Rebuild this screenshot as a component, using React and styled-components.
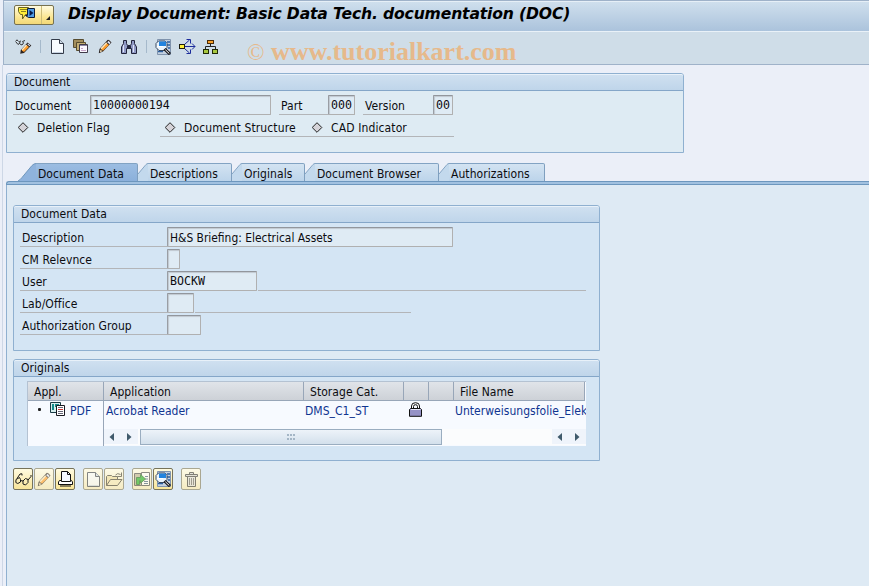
import React from 'react';
import styled, { createGlobalStyle } from 'styled-components';

const GlobalStyle = createGlobalStyle`
  body {
    margin: 0;
    background: #ebeff8;
    overflow: hidden;
  }
  * {
    box-sizing: border-box;
  }
`;

/* ---------- icons ---------- */

const Svg = ({ w = 16, h = 16, children, faded }) => (
    <Icon width={w} height={h} viewBox={`0 0 ${w} ${h}`} $faded={faded} fill="none">
        {children}
    </Icon>
);

const MenuIcon = () => (
    <Svg w={18} h={14}>
        <path d="M0.500 0.500 H10.500 V7.500 H7.500 L4.500 12 V7.500 H2.500 L0.500 4.500 Z" fill="#ffee3a" stroke="#6a6420" />
        <path d="M2 2.500 H9 M3 4.500 H8" stroke="#8a8220" />
        <path d="M9.500 1.500 H16.500 V10.500 H10.500 L7.500 8.500 H9.500 Z" fill="#4f9de8" stroke="#101c38" />
        <path d="M11.500 3 L15.500 6 L11.500 9 Z" fill="#061a4a" />
    </Svg>
);

const DisplayChangeIcon = () => (
    <Svg w={17}>
        <path d="M0.500 2.500 L2 0.800 L3.500 2.500 M1 3 L3 5.500 L5 4 L4.500 2.500 L6 2 M5 5 L7 6 L8.500 4 L7.500 2.500 L10 1.500" stroke="#333" />
        <path d="M5.200 14.800 L5.800 11 L12.500 3.500 L16.300 6.500 L9 14 Z" fill="#2a2220" />
        <path d="M6.800 11.500 L11.500 6 L14 8 L9 13 Z" fill="#ff9d2c" />
        <path d="M7 11 L11.500 6" stroke="#ffe9bd" strokeWidth="1.400" />
        <path d="M12.300 5.200 L13 4.500 L15.200 6.400 L14.500 7.200 Z" fill="#dfe3f4" />
    </Svg>
);

const PageIcon = ({ faded }) => (
    <Svg w={13} h={15} faded={faded}>
        <path d="M0.500 0.500 H8.500 L12.500 4.500 V14.500 H0.500 Z" fill="#f7fbff" stroke="#333a48" />
        <path d="M8.500 0.500 V4.500 H12.500" fill="#cfdbe8" stroke="#333a48" />
        <path d="M1.500 13.500 H11.500" stroke="#c7d3e2" />
    </Svg>
);

const CopyIcon = () => (
    <Svg w={16} h={15}>
        <path d="M0.500 0.500 H10.500 V8.500 H0.500 Z" fill="#a38e5c" stroke="#574c30" />
        <path d="M3.500 3.500 H12.500 V11.500 H3.500 Z" fill="#c4ae74" stroke="#574c30" />
        <path d="M6.500 5.500 H14.500 V13.500 H6.500 Z" fill="#fbf8ff" stroke="#3f3a48" />
        <path d="M7 6.500 H14" stroke="#8d86a4" />
        <path d="M8 9.500 H10 M8 11.500 H13" stroke="#c6a4c8" />
    </Svg>
);

const PencilIcon = ({ faded }) => (
    <Svg w={14} h={15} faded={faded}>
        <path d="M0.800 14.200 L1.500 10 L9.500 1 Q11 0.300 13.500 3.500 L5 12.500 Z" fill="#2a2220" />
        <path d="M2.800 10 L8.500 4 L11 6 L5 11.800 Z" fill="#ff9d2c" />
        <path d="M3 9.700 L8.700 3.800" stroke="#ffe9bd" strokeWidth="1.500" />
        <path d="M9.200 3.200 L10.500 1.800 L12.500 3.700 L11.500 5.200 Z" fill="#dfe3f4" />
        <path d="M2.400 10.500 L4.400 12.200 L2 13.200 Z" fill="#f6dcae" />
    </Svg>
);

const BinocularsIcon = () => (
    <Svg w={16}>
        <path d="M2.500 1.500 H5.500 V4.500 L6.500 6.500 H9.500 L10.500 4.500 V1.500 H13.500 V4.500 L15.500 8 V14.500 H10.500 V9.500 H5.500 V14.500 H0.500 V8 L2.500 4.500 Z" fill="#8f98c4" stroke="#22243c" />
        <path d="M2.500 6 V13 M12.500 6 V13" stroke="#dfe4f6" />
        <path d="M6 8 H10" stroke="#22243c" strokeWidth="2" />
    </Svg>
);

const SearchDocIcon = () => (
    <Svg w={17}>
        <path d="M2.500 0.500 H15.500 V15.500 H2.500 Z" fill="#c3d0e0" stroke="#7f93ad" />
        <path d="M12 3 H15 M12 6 H15 M13 9 H15 M3 12.500 H8" stroke="#2c5f9f" strokeWidth="1.500" />
        <path d="M3.500 2 H10 L12 4.500 V8.500 L9.500 11.500 H4 L1 8.500 V4.500 Z" fill="#eaf4fd" stroke="#3a4a60" />
        <path d="M4 2.500 H11 V7 H4 Z" fill="#2283de" />
        <path d="M2 7.500 H8" stroke="#fff" />
        <path d="M9.500 10 L15 15.200" stroke="#16161c" strokeWidth="3" />
        <path d="M10.300 10.700 L14.300 14.500" stroke="#fff" strokeWidth="1" />
    </Svg>
);

const ArrowsIcon = () => (
    <Svg w={17} h={15}>
        <path d="M6 7.500 H16 M6 5 L10.500 1 M6 10 L10.500 14 M13 4.500 L16 7.500 L13 10.500 M7.500 0.500 H11.500 V4.500 M7.500 14.500 H11.500 V10.500" stroke="#1c2c9c" />
        <rect x="0.500" y="5.500" width="5" height="4" fill="#fff23c" stroke="#1d1d10" />
    </Svg>
);

const TreeIcon = () => (
    <Svg w={16} h={14}>
        <path d="M7.500 4 V7 M2.500 10 V6.500 H12.500 V10" stroke="#222" />
        <rect x="4.500" y="0.500" width="6" height="3" fill="#f7a02a" stroke="#4a2c08" />
        <rect x="0.500" y="9.500" width="5" height="4" fill="#a8c840" stroke="#1f2a08" />
        <rect x="9.500" y="9.500" width="5" height="4" fill="#a8c840" stroke="#1f2a08" />
    </Svg>
);

const Diamond = () => (
    <Svg w={11} h={11}>
        <path d="M5 0.700 L9.800 5.500 L5 10.300 L0.200 5.500 Z" fill="#d5d3d8" stroke="#222" />
    </Svg>
);

const DocTypeIcon = () => (
    <Svg w={15} h={14}>
        <path d="M0.500 0.500 H10.500 V10.500 H0.500 Z" fill="#d6eeee" stroke="#1a3b44" />
        <path d="M2 2 H4 V8 H2 Z M5 2 H9 V5 H5 Z" fill="#138a8a" />
        <path d="M6.500 3.500 H14.500 V13.500 H6.500 Z" fill="#fff" stroke="#1a1a22" />
        <path d="M8 5.500 H13 M8 9.500 H13 M8 11.500 H13" stroke="#667" />
        <path d="M8 7.500 H13" stroke="#c33" />
    </Svg>
);

const LockIcon = () => (
    <Svg w={13} h={15}>
        <path d="M2.500 7 V4 Q2.500 0.700 6.500 0.700 Q10.500 0.700 10.500 4 V7" fill="#fff" stroke="#111" />
        <path d="M4.500 7 V4.500 Q4.500 2.700 6.500 2.700 Q8.500 2.700 8.500 4.500 V7" fill="#f7faff" stroke="#111" />
        <path d="M1.500 6.500 H11.500 L12.500 7.500 V14.300 H0.500 V7.500 Z" fill="#9592c6" stroke="#111" />
        <path d="M2 7.500 H11.500" stroke="#e6e6f8" />
    </Svg>
);

const GlassesIcon = () => (
    <Svg w={17} h={13}>
        <path d="M4.500 4.500 L1 6.500 L0.800 9.500 L2.800 10.500 L5.500 9 L5.500 6.500 Z M10.500 5.500 L8 8 L8 11 L10.500 12 L13 9.500 L13 6.500 Z M5.500 7.500 L8 8 M2 5.500 L5 1 L7 0.800 L7 2.500 M13 7 L16 3.500 V2" stroke="#1a1a1a" />
    </Svg>
);

const PrintIcon = () => (
    <Svg w={15} h={16}>
        <path d="M3.500 0.500 H9.500 L12.500 3.500 V10.500 H3.500 Z" fill="#f7fbff" stroke="#111" />
        <path d="M9.500 0.500 V3.500 H12.500" stroke="#111" />
        <path d="M3.500 9.500 H1.500 L0.500 11 V13.500 H14.500 V11 L13.500 9.500 H12.500 V10.500 H3.500 Z" fill="#fff" stroke="#111" />
        <path d="M2 15 H13" stroke="#111" strokeWidth="1" />
    </Svg>
);

const OpenIcon = () => (
    <Svg w={17} h={15} faded>
        <path d="M0.500 13.500 V4.500 L1.500 3.500 H5.500 L6.500 4.500 H11.500 V7.500" fill="#f0dfa2" stroke="#3c3a30" />
        <path d="M0.500 13.500 L4.500 7.500 H16 L11.500 13.500 Z" fill="#f6eaba" stroke="#3c3a30" />
        <path d="M9.500 3 Q11.500 0.500 14.500 2.500 M15.500 0.500 V4.500 H11.500" stroke="#3c3a30" />
    </Svg>
);

const CheckInIcon = () => (
    <Svg w={17} h={15} faded>
        <path d="M0.500 1.500 H7.500 V13.500 H0.500 Z" fill="#b8b08f" stroke="#444" />
        <path d="M7.500 0.500 H15.500 V13.500 H7.500 Z" fill="#fff" stroke="#444" />
        <path d="M11 4.500 H14 M11 7 H14 M10 9.500 H14 M10 11.500 H14" stroke="#3b587c" />
        <path d="M2.500 12.500 V5.500 H6.500 V2.500 L11.500 7 L6.500 11 V8.500 H5.500 V12.500 Z" fill="#18b020" stroke="#176a1c" />
    </Svg>
);

const TrashIcon = () => (
    <Svg w={13} h={15} faded>
        <path d="M0.500 2.500 H12.500 V4.500 H0.500 Z M4.500 2.500 V0.500 H8.500 V2.500" fill="#d6d6d6" stroke="#333" />
        <path d="M2.500 4.500 H10.500 V14.500 H2.500 Z" fill="#e0e0e0" stroke="#333" />
        <path d="M4.500 6 V13 M6.500 6 V13 M8.500 6 V13" stroke="#666" />
    </Svg>
);

const Arrow = ({ left }) => (
    <ArrowBox $left={left}>
        <Svg w={5} h={8}>
            <path d={left ? 'M5 0 V8 L0.500 4 Z' : 'M0 0 V8 L4.500 4 Z'} fill="#3f5a6b" />
        </Svg>
    </ArrowBox>
);

/* ---------- page ---------- */

const tabs = [
    { title: 'Document Data', width: 120, slant: 18, active: true },
    { title: 'Descriptions', width: 94, slant: 10 },
    { title: 'Originals', width: 73, slant: 10 },
    { title: 'Document Browser', width: 134, slant: 10 },
    { title: 'Authorizations', width: 106, slant: 10 },
];

const fields = [
    { label: 'Description', value: 'H&S Briefing: Electrical Assets', width: 286 },
    { label: 'CM Relevnce', value: '', width: 13 },
    { label: 'User', value: 'BOCKW', width: 90, mono: true, line: 328 },
    { label: 'Lab/Office', value: '', width: 27, line: 216 },
    { label: 'Authorization Group', value: '', width: 34 },
];

const App = () => {
    return (
        <Page>
            <GlobalStyle />
            <Header>
                <TitleBar>
                    <MenuButton>
                        <MenuMain><MenuIcon /></MenuMain>
                        <MenuDrop>
                            <Svg w={4} h={4}><path d="M4 0 V4 H0 Z" fill="#222" /></Svg>
                        </MenuDrop>
                    </MenuButton>
                    <Title>Display Document: Basic Data Tech. documentation (DOC)</Title>
                </TitleBar>
                <Toolbar>
                    <Tool $width={25}><DisplayChangeIcon /></Tool>
                    <Separator $gap={10} />
                    <Tool $width={22}><PageIcon /></Tool>
                    <Tool $width={25}><CopyIcon /></Tool>
                    <Tool $width={23}><PencilIcon /></Tool>
                    <Tool $width={25}><BinocularsIcon /></Tool>
                    <Separator $gap={8} />
                    <Tool $width={24}><SearchDocIcon /></Tool>
                    <Tool $width={24}><ArrowsIcon /></Tool>
                    <Tool $width={24}><TreeIcon /></Tool>
                </Toolbar>
                <Watermark><span>©</span> www.tutorialkart.com</Watermark>
            </Header>
            <Main>
                <DocumentPanel>
                    <PanelHeader>Document</PanelHeader>
                    <Row $indent={6} $top={2}>
                        <Label $width={77} $pad={2}>Document</Label>
                        <Field $width={181} $mono>10000000194</Field>
                        <Label $width={49} $pad={2} $gap={8}>Part</Label>
                        <Field $width={27} $mono>000</Field>
                        <Label $width={70} $pad={2} $gap={8}>Version</Label>
                        <Field $width={20} $mono>00</Field>
                    </Row>
                    <Row $indent={6}>
                        <Flag $width={147} $pad={5}><Diamond />Deletion Flag</Flag>
                        <Flag $width={147} $pad={5} $line><Diamond />Document Structure</Flag>
                        <Flag $width={147} $pad={5} $line><Diamond />CAD Indicator</Flag>
                    </Row>
                </DocumentPanel>
                <TabList>
                    {tabs.map((tab) => (
                        <Tab key={tab.title} $width={tab.width}>
                            <Svg w={tab.slant} h={18}>
                                {tab.active ? (
                                    <>
                                        <path d="M0 18 Q2 17 4 14.500 L14 2.500 Q16 0.500 18 0.500 V18 Z" fill="#8fb3dd" />
                                        <path d="M0 18 Q2 17 4 14.500 L14 2.500 Q16 0.500 18 0.500" stroke="#6f97bd" />
                                    </>
                                ) : (
                                    <>
                                        <path d="M0 11 L9 1 H10 V18 H0 Z" fill="#c3d9ed" />
                                        <path d="M0 11 L8 1.500 Q9 0.500 10 0.500" stroke="#82a3c3" />
                                    </>
                                )}
                            </Svg>
                            <TabBody $active={tab.active}>{tab.title}</TabBody>
                        </Tab>
                    ))}
                </TabList>
                <TabStrip />
                <TabPage>
                    <Group $height={146}>
                        <PanelHeader>Document Data</PanelHeader>
                        <Fields>
                            {fields.map((field) => (
                                <Row key={field.label} $indent={6}>
                                    <Label $width={147} $pad={2}>{field.label}</Label>
                                    <Field $width={field.width} $mono={field.mono}>{field.value}</Field>
                                    {field.line && <Line $width={field.line} />}
                                </Row>
                            ))}
                        </Fields>
                    </Group>
                    <Group $height={102}>
                        <PanelHeader>Originals</PanelHeader>
                        <Table>
                            <Cells>
                                <HeadCell>Appl.</HeadCell>
                                <HeadCell>Application</HeadCell>
                                <HeadCell>Storage Cat.</HeadCell>
                                <HeadCell />
                                <HeadCell />
                                <HeadCell>File Name</HeadCell>
                                <FirstCell><Bullet /><DocTypeIcon />PDF</FirstCell>
                                <Cell $pad={2}>Acrobat Reader</Cell>
                                <Cell>DMS_C1_ST</Cell>
                                <LockCell><LockIcon /></LockCell>
                                <Cell />
                                <Cell>Unterweisungsfolie_Elek</Cell>
                            </Cells>
                            <ScrollRow>
                                <ScrollBar>
                                    <Arrow left />
                                    <Arrow />
                                    <Thumb>
                                        <Svg w={8} h={6}>
                                            <path d="M0 1 H8 M0 5 H8" stroke="#a4b6c6" strokeWidth="2" strokeDasharray="2 1" />
                                        </Svg>
                                    </Thumb>
                                    <Track />
                                    <Arrow left />
                                    <Arrow />
                                </ScrollBar>
                            </ScrollRow>
                        </Table>
                    </Group>
                    <Actions>
                        <ActionButton><GlassesIcon /></ActionButton>
                        <ActionButton $faded><PencilIcon faded /></ActionButton>
                        <ActionButton><PrintIcon /></ActionButton>
                        <ActionButton $faded $gap={7}><PageIcon faded /></ActionButton>
                        <ActionButton $faded><OpenIcon /></ActionButton>
                        <ActionButton $faded $gap={7}><CheckInIcon /></ActionButton>
                        <ActionButton><SearchDocIcon /></ActionButton>
                        <ActionButton $faded $gap={7}><TrashIcon /></ActionButton>
                    </Actions>
                </TabPage>
            </Main>
        </Page>
    );
};

export default App;

const Icon = styled.svg`
  display: block;
  flex: none;
  opacity: ${(p) => (p.$faded ? 0.6 : 1)};
`;

const Page = styled.div`
  width: 869px;
  height: 586px;
  overflow: hidden;
  display: flex;
  flex-direction: column;
  background: #ebeff8;
  color: #0c0c10;
  font-family: "DejaVu Sans Condensed", "DejaVu Sans", sans-serif;
  font-stretch: condensed;
  font-size: 12px;
  line-height: 16px;
  letter-spacing: 0.06px;
  white-space: nowrap;
`;

const Header = styled.div`
  position: relative;
  flex: none;
  margin-left: 3px;
  height: 65px;
  border: solid #9fb2c9;
  border-width: 1px 0 1px 1px;
`;

const TitleBar = styled.div`
  display: flex;
  align-items: flex-start;
  height: 31px;
  padding: 4px 0 0 10px;
  border-top: 1px solid #e6eff7;
  border-bottom: 1px solid #e9f1f8;
  background: linear-gradient(#cfdfed, #abc3dc);
`;

const MenuButton = styled.div`
  display: flex;
  width: 40px;
  height: 20px;
  margin-top: -1px;
  border: 1px solid #77714f;
  border-radius: 2px;
  background: linear-gradient(#fffbe0, #fbe795 60%, #f3d877);
`;

const MenuMain = styled.div`
  width: 27px;
  padding: 1px 0 0 3px;
  border-right: 1px solid #cdbd78;
`;

const MenuDrop = styled.div`
  flex: 1;
  display: flex;
  align-items: flex-end;
  justify-content: flex-end;
  padding: 0 3px 4px 0;
`;

const Title = styled.div`
  margin-left: 14px;
  margin-top: -2px;
  font-family: "DejaVu Sans", sans-serif;
  font-stretch: normal;
  font-size: 15.6px;
  line-height: 20px;
  letter-spacing: -0.15px;
  font-weight: bold;
  font-style: italic;
  color: #000;
`;

const Toolbar = styled.div`
  display: flex;
  align-items: center;
  height: 32px;
  padding: 0 0 3px 11px;
  background: #cfdde8;
`;

const Tool = styled.div`
  width: ${(p) => p.$width}px;
  flex: none;
`;

const Separator = styled.div`
  width: 1px;
  height: 13px;
  margin-right: ${(p) => p.$gap}px;
  background: #a5b9cb;
`;

const Watermark = styled.div`
  position: absolute;
  left: 243px;
  top: 36px;
  font-family: "Liberation Serif", serif;
  font-size: 26px;
  line-height: 30px;
  letter-spacing: 0;
  font-weight: bold;
  color: #e6b98b;
  span {
    font-weight: normal;
    font-size: 23px;
  }
`;

const Main = styled.div`
  flex: 1;
  margin-left: 2px;
  padding: 8px 0 0 3px;
  border-left: 1px solid #cdd7e6;
  display: flex;
  flex-direction: column;
`;

const DocumentPanel = styled.div`
  width: 678px;
  height: 80px;
  flex: none;
  border: 1px solid #8fb0d0;
  border-radius: 3px 3px 0 0;
  background: #deebf3;
`;

const PanelHeader = styled.div`
  height: 17px;
  padding-left: 7px;
  border-top: 1px solid #e8f1f9;
  border-bottom: 1px solid #84a6c8;
  border-radius: 2px 2px 0 0;
  background: linear-gradient(#cfe0f0, #bfd5ea);
  line-height: 15px;
`;

const Row = styled.div`
  display: flex;
  align-items: flex-end;
  height: 22px;
  margin-top: ${(p) => p.$top || 0}px;
  padding-left: ${(p) => p.$indent}px;
`;

const Label = styled.div`
  width: ${(p) => p.$width}px;
  height: 20px;
  margin-left: ${(p) => p.$gap || 0}px;
  padding: 3px 0 0 ${(p) => p.$pad}px;
  border-bottom: 1px solid #b3b5b8;
`;

const Field = styled.div`
  width: ${(p) => p.$width}px;
  height: 20px;
  padding-left: 2px;
  border: 1px solid;
  border-color: #92969c #b0b0b0 #b0b0b0 #9a9ea4;
  border-radius: 1px;
  background: #dfebf4;
  box-shadow: inset 1px 1px 1px #c0c8d0;
  font-family: ${(p) => (p.$mono ? '"DejaVu Sans Mono", monospace' : 'inherit')};
  font-size: ${(p) => (p.$mono ? 11.6 : 11.9)}px;
  letter-spacing: 0;
  line-height: ${(p) => (p.$mono ? 19 : 20)}px;
`;

const Line = styled.div`
  width: ${(p) => p.$width}px;
  height: 1px;
  margin-left: 1px;
  background: #b3b5b8;
`;

const Flag = styled.div`
  display: flex;
  align-items: center;
  gap: 8px;
  width: ${(p) => p.$width}px;
  height: 18px;
  padding-left: ${(p) => p.$pad}px;
  letter-spacing: 0.12px;
  border-bottom: 1px solid ${(p) => (p.$line ? '#b3b5b8' : 'transparent')};
`;

const TabList = styled.div`
  display: flex;
  flex: none;
  height: 18px;
  margin-top: 10px;
  padding-left: 12px;
`;

const Tab = styled.div`
  display: flex;
  width: ${(p) => p.$width}px;
`;

const TabBody = styled.div`
  flex: 1;
  padding-left: 2px;
  border-top: 1px solid #82a3c3;
  border-right: 1px solid #7f9fbf;
  border-radius: 0 2px 0 0;
  background: ${(p) => (p.$active ? 'linear-gradient(#9cbde2, #8bb0db)' : 'linear-gradient(#d3e3f2, #bcd4ea)')};
  line-height: 20px;
`;

const TabStrip = styled.div`
  flex: none;
  height: 4px;
  border: solid #6d97be;
  border-width: 1px 0 1px 1px;
  border-radius: 3px 0 0 0;
  background: #a1c1e0;
`;

const TabPage = styled.div`
  flex: 1;
  padding: 20px 0 0 6px;
  border-left: 1px solid #8fb0d0;
  background: #deeaf4;
`;

const Group = styled.div`
  width: 587px;
  height: ${(p) => p.$height}px;
  margin-bottom: 8px;
  border: 1px solid #8fb0d0;
  border-radius: 3px 3px 0 0;
  background: #d4e5f4;
`;

const Fields = styled.div`
  padding-top: 2px;
`;

const Table = styled.div`
  width: 559px;
  height: 65px;
  margin: 4px 0 0 13px;
  border-left: 1px solid #b4c2d2;
  border-top: 1px solid #b4c2d2;
  background: #f7faff;
  overflow: hidden;
`;

const Cells = styled.div`
  display: grid;
  grid-template-columns: 76px 200px 100px 25px 25px 131px;
  grid-template-rows: 19px 28px;
  color: #0f3590;
`;

const HeadCell = styled.div`
  padding-left: 6px;
  border-right: 1px solid #98a6b8;
  border-bottom: 1px solid #98a6b8;
  background: linear-gradient(#e0e4e9, #cdd1d7);
  color: #0c0c10;
  line-height: 20px;
`;

const Cell = styled.div`
  padding-left: ${(p) => p.$pad || 1}px;
  letter-spacing: 0.03px;
  line-height: 20px;
`;

const FirstCell = styled.div`
  display: flex;
  align-items: flex-start;
  padding: 2px 0 0 10px;
  border-right: 1px solid #98a6b8;
  svg {
    margin: -1px 5px 0 0;
  }
`;

const Bullet = styled.div`
  width: 3px;
  height: 3px;
  margin: 5px 9px 0 0;
  border-radius: 1px;
  background: #222;
`;

const LockCell = styled.div`
  padding: 1px 0 0 5px;
`;

const ScrollRow = styled.div`
  width: 76px;
  height: 17px;
  border-right: 1px solid #98a6b8;
`;

const ScrollBar = styled.div`
  display: flex;
  width: 482px;
  height: 16px;
  margin-left: 76px;
  background: #fbfcfd;
`;

const ArrowBox = styled.div`
  display: flex;
  align-items: center;
  justify-content: center;
  flex: none;
  width: 17px;
  height: 15px;
  padding-right: ${(p) => (p.$left ? 2 : 0)}px;
  background: #eff4fb;
`;

const Thumb = styled.div`
  display: flex;
  align-items: center;
  justify-content: center;
  flex: none;
  width: 302px;
  height: 16px;
  margin-left: 2px;
  border: 1px solid #9aadc0;
  background: linear-gradient(#edf3f9, #d3e0ec);
`;

const Track = styled.div`
  flex: 1;
`;

const Actions = styled.div`
  display: flex;
  gap: 1px;
  margin-top: -1px;
`;

const ActionButton = styled.div`
  display: flex;
  align-items: center;
  justify-content: center;
  width: 20px;
  height: 22px;
  margin-left: ${(p) => p.$gap || 0}px;
  border: 1px solid ${(p) => (p.$faded ? '#aaa791' : '#77735a')};
  border-radius: 2px;
  background: ${(p) => (p.$faded ? 'linear-gradient(#fdfae6, #f5ebc2)' : 'linear-gradient(#fffbe0, #f8e59a)')};
`;
